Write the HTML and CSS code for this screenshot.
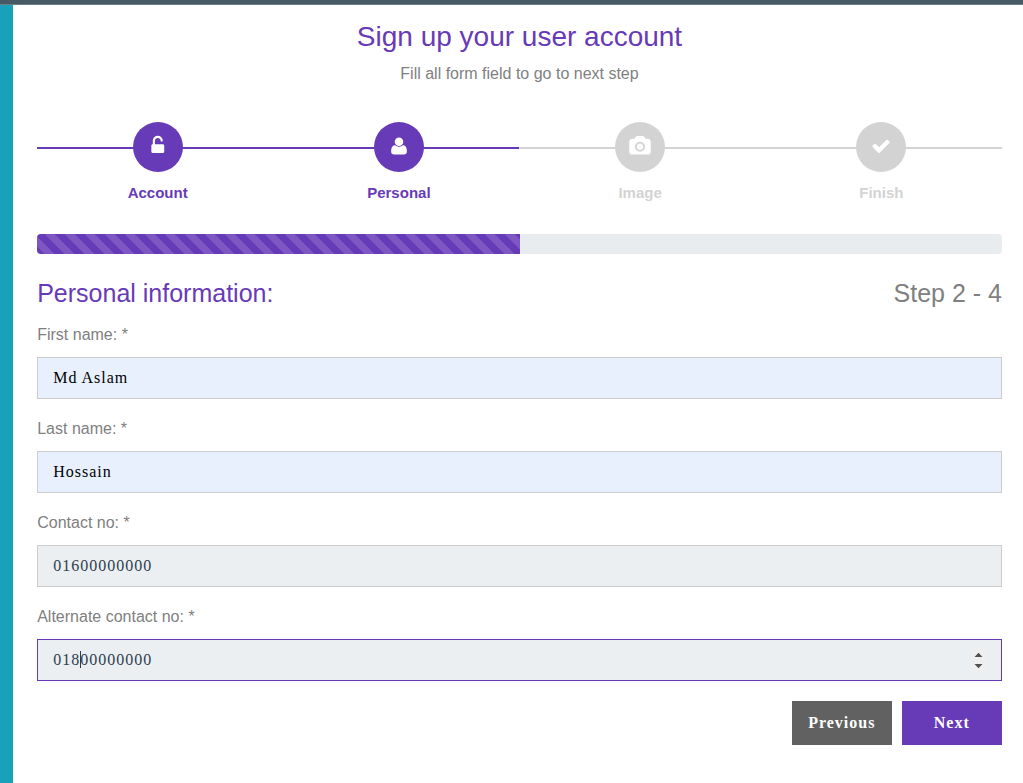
FILE: index.html
```html
<!DOCTYPE html>
<html lang="en">
<head>
<meta charset="utf-8">
<title>Sign up your user account</title>
<link rel="stylesheet" href="styles.css">
</head>
<body>
<main class="card">
  <h1 class="title">Sign up your user account</h1>
  <p class="subtitle">Fill all form field to go to next step</p>

  <ol class="steps">
    <li class="step active">
      <span class="dot"><svg class="icon" viewBox="20 20 1792 1792"><path d="M1376 768q40 0 68 28t28 68v576q0 40-28 68t-68 28h-960q-40 0-68-28t-28-68v-576q0-40 28-68t68-28h32v-320q0-185 131.500-316.500t316.500-131.500 316.500 131.500 131.500 316.500q0 26-19 45t-45 19h-64q-26 0-45-19t-19-45q0-106-75-181t-181-75-181 75-75 181v320h736z"/></svg></span>
      <strong>Account</strong>
    </li>
    <li class="step active">
      <span class="dot"><svg class="icon" viewBox="0 0 1792 1792"><path d="M1600 1405q0 120-73 189.500t-194 69.500h-874q-121 0-194-69.500t-73-189.500q0-53 3.500-103.500t14-109 26.500-108.500 43-97.500 62-81 85.500-53.500 111.500-20q9 0 42 21.500t74.500 48 108 48 133.500 21.500 133.500-21.500 108-48 74.500-48 42-21.500q61 0 111.500 20t85.500 53.500 62 81 43 97.500 26.500 108.500 14 109 3.500 103.500zm-320-893q0 159-112.500 271.500t-271.500 112.500-271.500-112.500-112.500-271.500 112.500-271.500 271.500-112.500 271.500 112.500 112.500 271.500z"/></svg></span>
      <strong>Personal</strong>
    </li>
    <li class="step">
      <span class="dot"><svg class="icon" viewBox="0 0 1792 1792"><path d="M896 672q119 0 203.500 84.500t84.500 203.500-84.500 203.500-203.500 84.500-203.500-84.500-84.500-203.500 84.500-203.500 203.500-84.500zm704-416q106 0 181 75t75 181v896q0 106-75 181t-181 75h-1408q-106 0-181-75t-75-181v-896q0-106 75-181t181-75h224l51-136q19-49 69.500-84.500t103.500-35.500h512q53 0 103.500 35.500t69.500 84.500l51 136h224zm-704 1152q185 0 316.500-131.500t131.500-316.500-131.500-316.500-316.500-131.500-316.500 131.500-131.500 316.500 131.500 316.500 316.500 131.500z"/></svg></span>
      <strong>Image</strong>
    </li>
    <li class="step">
      <span class="dot"><svg class="icon" viewBox="0 0 1792 1792"><path d="M1671 566q0 40-28 68l-724 724-136 136q-28 28-68 28t-68-28l-136-136-362-362q-28-28-28-68t28-68l136-136q28-28 68-28t68 28l294 295 656-657q28-28 68-28t68 28l136 136q28 28 28 68z"/></svg></span>
      <strong>Finish</strong>
    </li>
  </ol>

  <div class="progress"><div class="progress-bar" style="width: 50%"></div></div>

  <form class="form">
    <div class="form-head">
      <h2 class="form-title">Personal information:</h2>
      <h2 class="form-count">Step 2 - 4</h2>
    </div>
    <label class="label" for="fname">First name: *</label>
    <input class="input filled" id="fname" type="text" value="Md Aslam">
    <label class="label" for="lname">Last name: *</label>
    <input class="input filled" id="lname" type="text" value="Hossain">
    <label class="label" for="phone">Contact no: *</label>
    <input class="input" id="phone" type="text" value="01600000000">
    <label class="label" for="phone2">Alternate contact no: *</label>
    <div class="number">
      <input class="input focused" id="phone2" type="text" value="01800000000">
      <span class="caret"></span>
      <span class="spinner"><svg class="arrows" viewBox="0 0 15 24"><path d="M3.500 9 7.500 4.700 11.500 9zM3.500 16 7.500 20.300 11.500 16z"/></svg></span>
    </div>
    <div class="actions">
      <button class="button previous" type="button">Previous</button>
      <button class="button next" type="button">Next</button>
    </div>
  </form>
</main>
</body>
</html>
```

FILE: styles.css
```css
* {
  box-sizing: border-box;
}

body {
  margin: 0;
  height: 783px;
  overflow: hidden;
  border-top: 4px solid #455a64;
  border-left: 13px solid #17a2b8;
  background: #fff;
  color: #808080;
  font: 16px/24px "Liberation Sans", Arial, sans-serif;
}

body::before {
  content: "";
  position: absolute;
  top: 0;
  left: 0;
  width: 100%;
  height: 4px;
  border-bottom: 1px solid #6f7f87;
  background: #455a64;
}

.card {
  padding: 16px 21px 0 24px;
}

.title {
  margin: 0 0 8px;
  color: #673ab7;
  font-size: 28px;
  font-weight: 400;
  line-height: 34px;
  text-align: center;
}

.subtitle {
  margin: 0;
  text-align: center;
}

.steps {
  display: grid;
  grid-template-columns: repeat(4, 1fr);
  margin: 36px 0 30px;
  padding: 0;
  list-style: none;
}

.step {
  position: relative;
  display: flex;
  flex-direction: column;
  align-items: center;
  gap: 10px;
  color: #d3d3d3;
  font-size: 15px;
  line-height: 22px;
}

.step::before {
  content: "";
  position: absolute;
  top: 25px;
  left: 0;
  width: 100%;
  height: 2px;
  background: #d3d3d3;
}

.step:nth-child(3)::before {
  left: -1px;
  width: calc(100% + 1px);
}

.step.active {
  color: #673ab7;
}

.step.active::before {
  background: #673ab7;
}

.dot {
  position: relative;
  display: flex;
  align-items: center;
  justify-content: center;
  width: 50px;
  height: 50px;
  padding-bottom: 2px;
  border-radius: 50%;
  background: currentColor;
}

.icon {
  width: 20px;
  height: 20px;
  overflow: visible;
  fill: #fff;
}

.progress {
  height: 20px;
  overflow: hidden;
  border-radius: 4px;
  background: #e9ecef;
}

.progress-bar {
  height: 100%;
  background-color: #673ab7;
  background-image: linear-gradient(45deg, rgba(255, 255, 255, .15) 25%, transparent 25%, transparent 50%, rgba(255, 255, 255, .15) 50%, rgba(255, 255, 255, .15) 75%, transparent 75%, transparent);
  background-position: 8px 0;
  background-size: 20px 20px;
}

.form {
  display: flex;
  flex-direction: column;
  padding-top: 24px;
}

.form-head {
  display: flex;
  justify-content: space-between;
  margin-bottom: 15px;
}

.form-title,
.form-count {
  margin: 0;
  font-size: 25px;
  font-weight: 400;
  line-height: 30px;
}

.form-title {
  padding-left: .2px;
  color: #673ab7;
}

.label {
  margin-bottom: 10px;
  padding-left: .2px;
}

.input {
  width: 100%;
  height: 42px;
  margin: 0 0 18px;
  padding: 8px 15px 8px 15.2px;
  border: 1px solid #ccc;
  border-radius: 0;
  outline: 0;
  background: #eceff1;
  color: #2c3e50;
  font: 16px "Liberation Serif", "Times New Roman", serif;
  letter-spacing: 1px;
}

.input.filled {
  background: #e8f0fe;
  color: #000;
}

.input.focused {
  margin: 0;
  border-color: #673ab7;
}

.number {
  position: relative;
  height: 42px;
}

.caret {
  position: absolute;
  top: 12px;
  left: 43px;
  width: 1px;
  height: 17px;
  background: #2c3e50;
}

.spinner {
  position: absolute;
  top: 9px;
  right: 16px;
  width: 15px;
  height: 24px;
  background: #efefef;
}

.arrows {
  display: block;
  fill: #505050;
}

.actions {
  display: flex;
  justify-content: flex-end;
  gap: 10px;
  margin-top: 20px;
}

.button {
  width: 100px;
  height: 44px;
  padding: 0 .4px 0 0;
  border: 0;
  color: #fff;
  font: bold 16px "Liberation Serif", "Times New Roman", serif;
  letter-spacing: 1px;
}

.previous {
  background: #616161;
}

.next {
  background: #673ab7;
}
```
